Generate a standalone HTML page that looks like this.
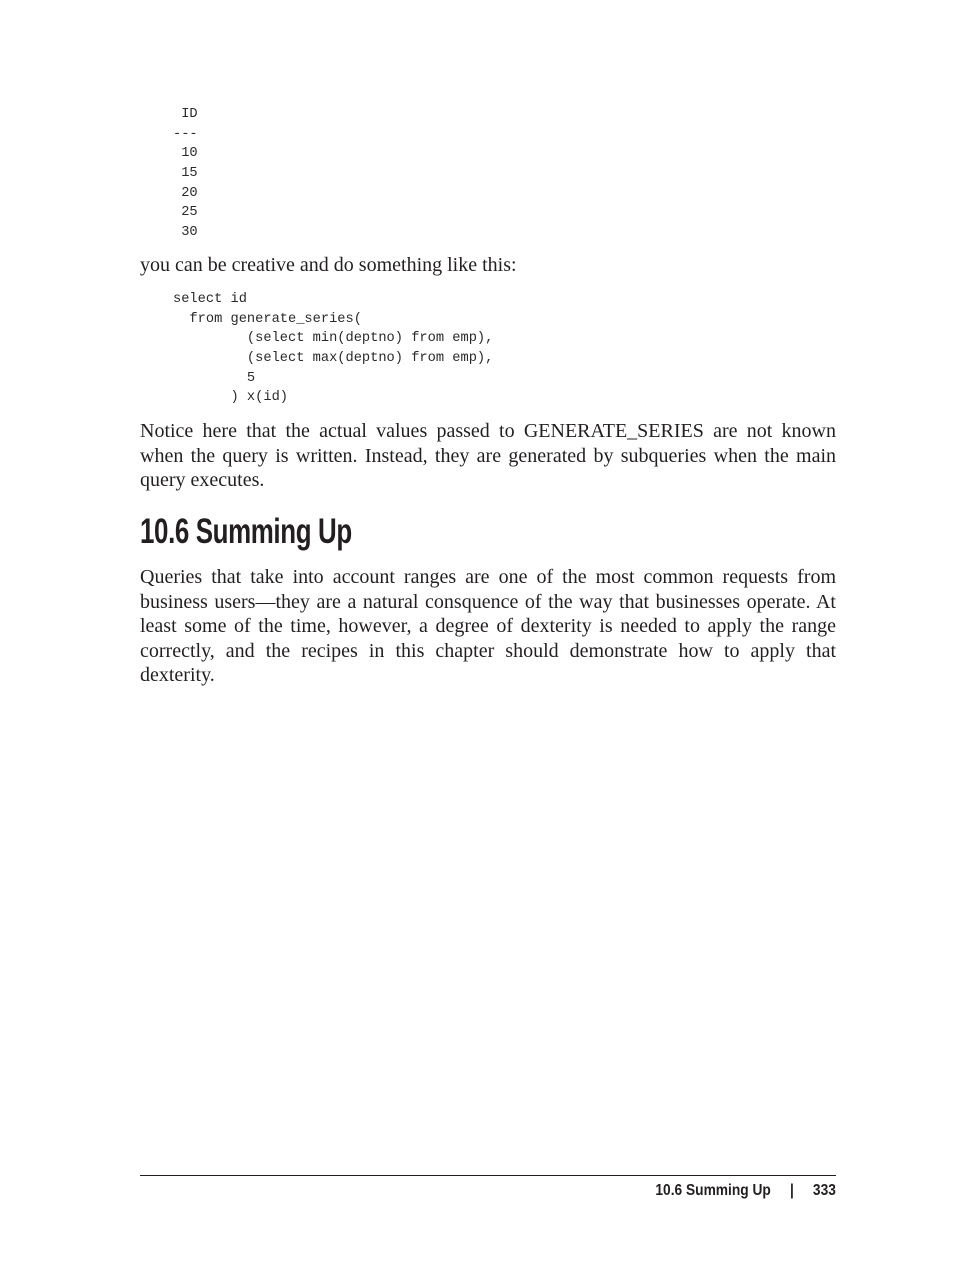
<!DOCTYPE html>
<html><head><meta charset="utf-8"><style>
body{margin:0;background:#fff;width:976px;height:1280px;position:relative;overflow:hidden;color:#231f20}
pre{position:absolute;left:173px;margin:0;font-family:"Liberation Mono",monospace;font-size:13.7px;line-height:19.65px;color:#2a2a2a}
.p{position:absolute;left:140px;width:696px;font-family:"Liberation Serif",serif;font-size:20px;line-height:24.5px;margin:0}
.p div{text-align:justify;text-align-last:justify;white-space:nowrap}
.p div.l{text-align-last:left}
h2{position:absolute;left:140px;top:512px;margin:0;font-family:"Liberation Sans",sans-serif;font-weight:bold;font-size:35px;letter-spacing:-0.5px;color:#231f20;transform:scaleX(0.74);transform-origin:left top;white-space:nowrap}
.rule{position:absolute;left:140px;top:1175px;width:696px;height:1px;background:#231f20}
.foot{position:absolute;right:140px;top:1182px;font-family:"Liberation Sans",sans-serif;font-weight:bold;font-size:16px;color:#231f20;transform:scaleX(0.86);transform-origin:right top;white-space:nowrap}
</style></head><body>
<pre style="top:105px"> ID
---
 10
 15
 20
 25
 30</pre>
<div class="p" style="top:253px"><div class="l">you can be creative and do something like this:</div></div>
<pre style="top:290px">select id
  from generate_series(
         (select min(deptno) from emp),
         (select max(deptno) from emp),
         5
       ) x(id)</pre>
<div class="p" style="top:419px">
<div style="white-space:normal">Notice here that the actual values passed to GENERATE_SERIES are not known</div>
<div style="white-space:normal">when the query is written. Instead, they are generated by subqueries when the main</div>
<div class="l">query executes.</div>
</div>
<h2>10.6 Summing Up</h2>
<div class="p" style="top:565px">
<div style="white-space:normal">Queries that take into account ranges are one of the most common requests from</div>
<div style="white-space:normal">business users—they are a natural consquence of the way that businesses operate. At</div>
<div style="white-space:normal">least some of the time, however, a degree of dexterity is needed to apply the range</div>
<div style="white-space:normal">correctly, and the recipes in this chapter should demonstrate how to apply that</div>
<div class="l">dexterity.</div>
</div>
<div class="rule"></div>
<div class="foot">10.6 Summing Up&nbsp;&nbsp;&nbsp;&nbsp;&nbsp;|&nbsp;&nbsp;&nbsp;&nbsp;&nbsp;333</div>
</body></html>
